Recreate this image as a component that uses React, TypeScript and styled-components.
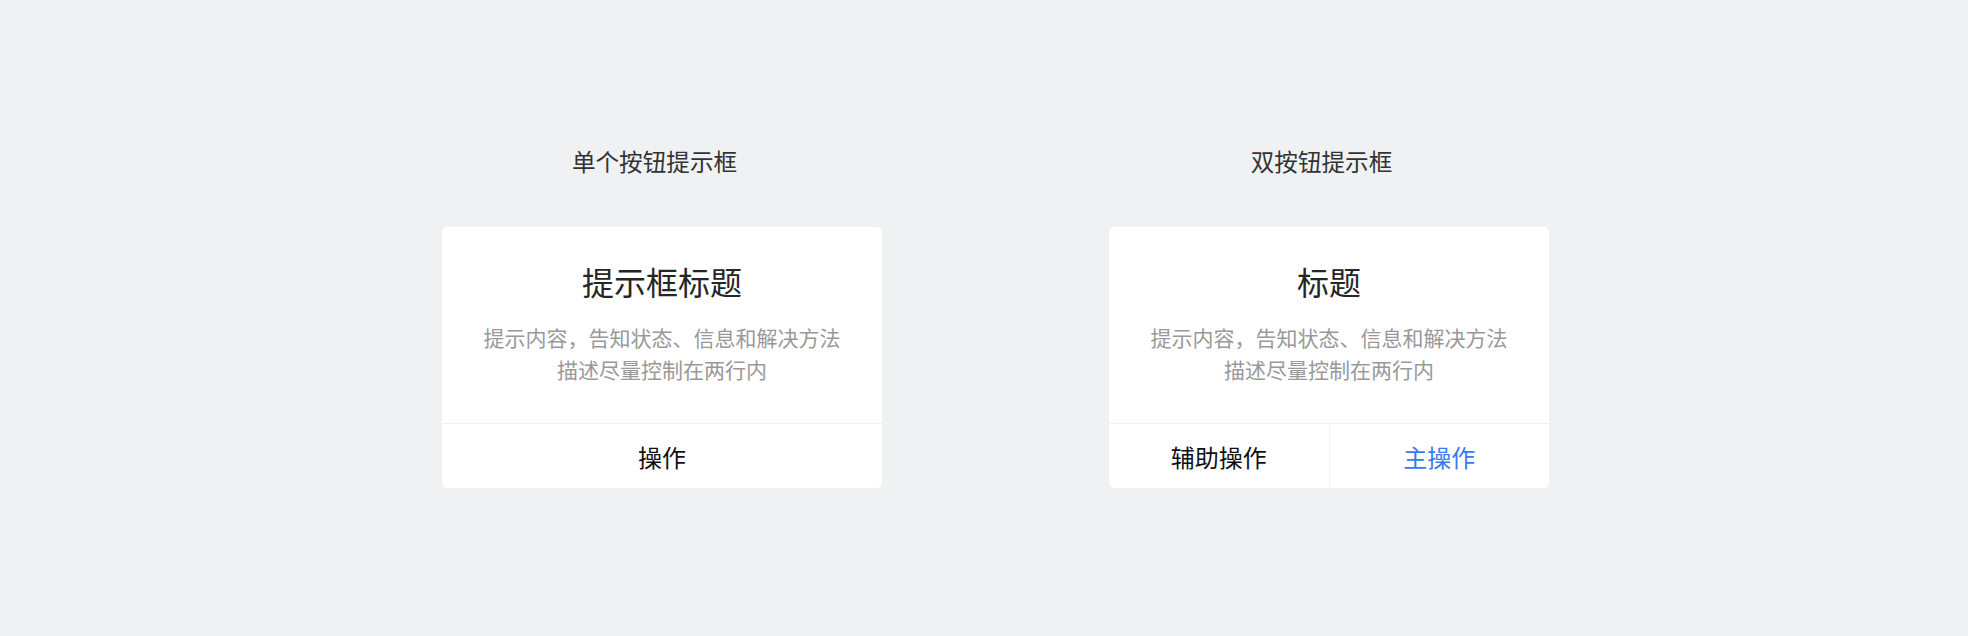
import React from "react";
import styled, { createGlobalStyle } from "styled-components";

const Global = createGlobalStyle`
  html, body { margin: 0; padding: 0; }
  body {
    background: #f0f1f3;
    font-family: "Noto Sans CJK SC", "Noto Sans", sans-serif;
    width: 1968px;
    height: 636px;
    overflow: hidden;
  }
`;

const Page = styled.div`
  display: flex;
  justify-content: flex-start;
  gap: 227px;
  padding: 0 0 0 442px;
  height: 636px;
  box-sizing: border-box;
`;

const Column = styled.div`
  display: flex;
  flex-direction: column;
  align-items: center;
  width: 440px;
  padding-top: 143px;
`;

const SectionTitle = styled.div`
  font-size: 23.6px;
  line-height: 36px;
  color: #333;
  padding-right: 15px;
  margin-bottom: 48px;
`;

const Card = styled.div`
  width: 440px;
  background: #fff;
  border-radius: 5px;
  overflow: hidden;
  display: flex;
  flex-direction: column;
`;

const Body = styled.div`
  padding: 32px 20px 38px;
  display: flex;
  flex-direction: column;
  align-items: center;
`;

const Title = styled.div`
  font-size: 32px;
  line-height: 44px;
  color: #262626;
  margin-bottom: 18px;
`;

const Content = styled.div`
  font-size: 21px;
  line-height: 32px;
  color: #999;
  text-align: center;
`;

const Footer = styled.div`
  display: flex;
  border-top: 1px solid #f0f0f0;
  height: 64px;
`;

const Action = styled.div<{ $primary?: boolean }>`
  flex: 1;
  display: flex;
  align-items: center;
  justify-content: center;
  font-size: 24px;
  color: ${(p) => (p.$primary ? "#3b78f6" : "#111")};
  & + & {
    border-left: 1px solid #f0f0f0;
  }
`;

function Dialog({ title, actions }: { title: string; actions: { label: string; primary?: boolean }[] }) {
  return (
    <Card>
      <Body>
        <Title>{title}</Title>
        <Content>
          提示内容，告知状态、信息和解决方法
          <br />
          描述尽量控制在两行内
        </Content>
      </Body>
      <Footer>
        {actions.map((a) => (
          <Action key={a.label} $primary={a.primary}>
            {a.label}
          </Action>
        ))}
      </Footer>
    </Card>
  );
}

export default function App() {
  return (
    <>
      <Global />
      <Page>
        <Column>
          <SectionTitle>单个按钮提示框</SectionTitle>
          <Dialog title="提示框标题" actions={[{ label: "操作" }]} />
        </Column>
        <Column>
          <SectionTitle>双按钮提示框</SectionTitle>
          <Dialog title="标题" actions={[{ label: "辅助操作" }, { label: "主操作", primary: true }]} />
        </Column>
      </Page>
    </>
  );
}
